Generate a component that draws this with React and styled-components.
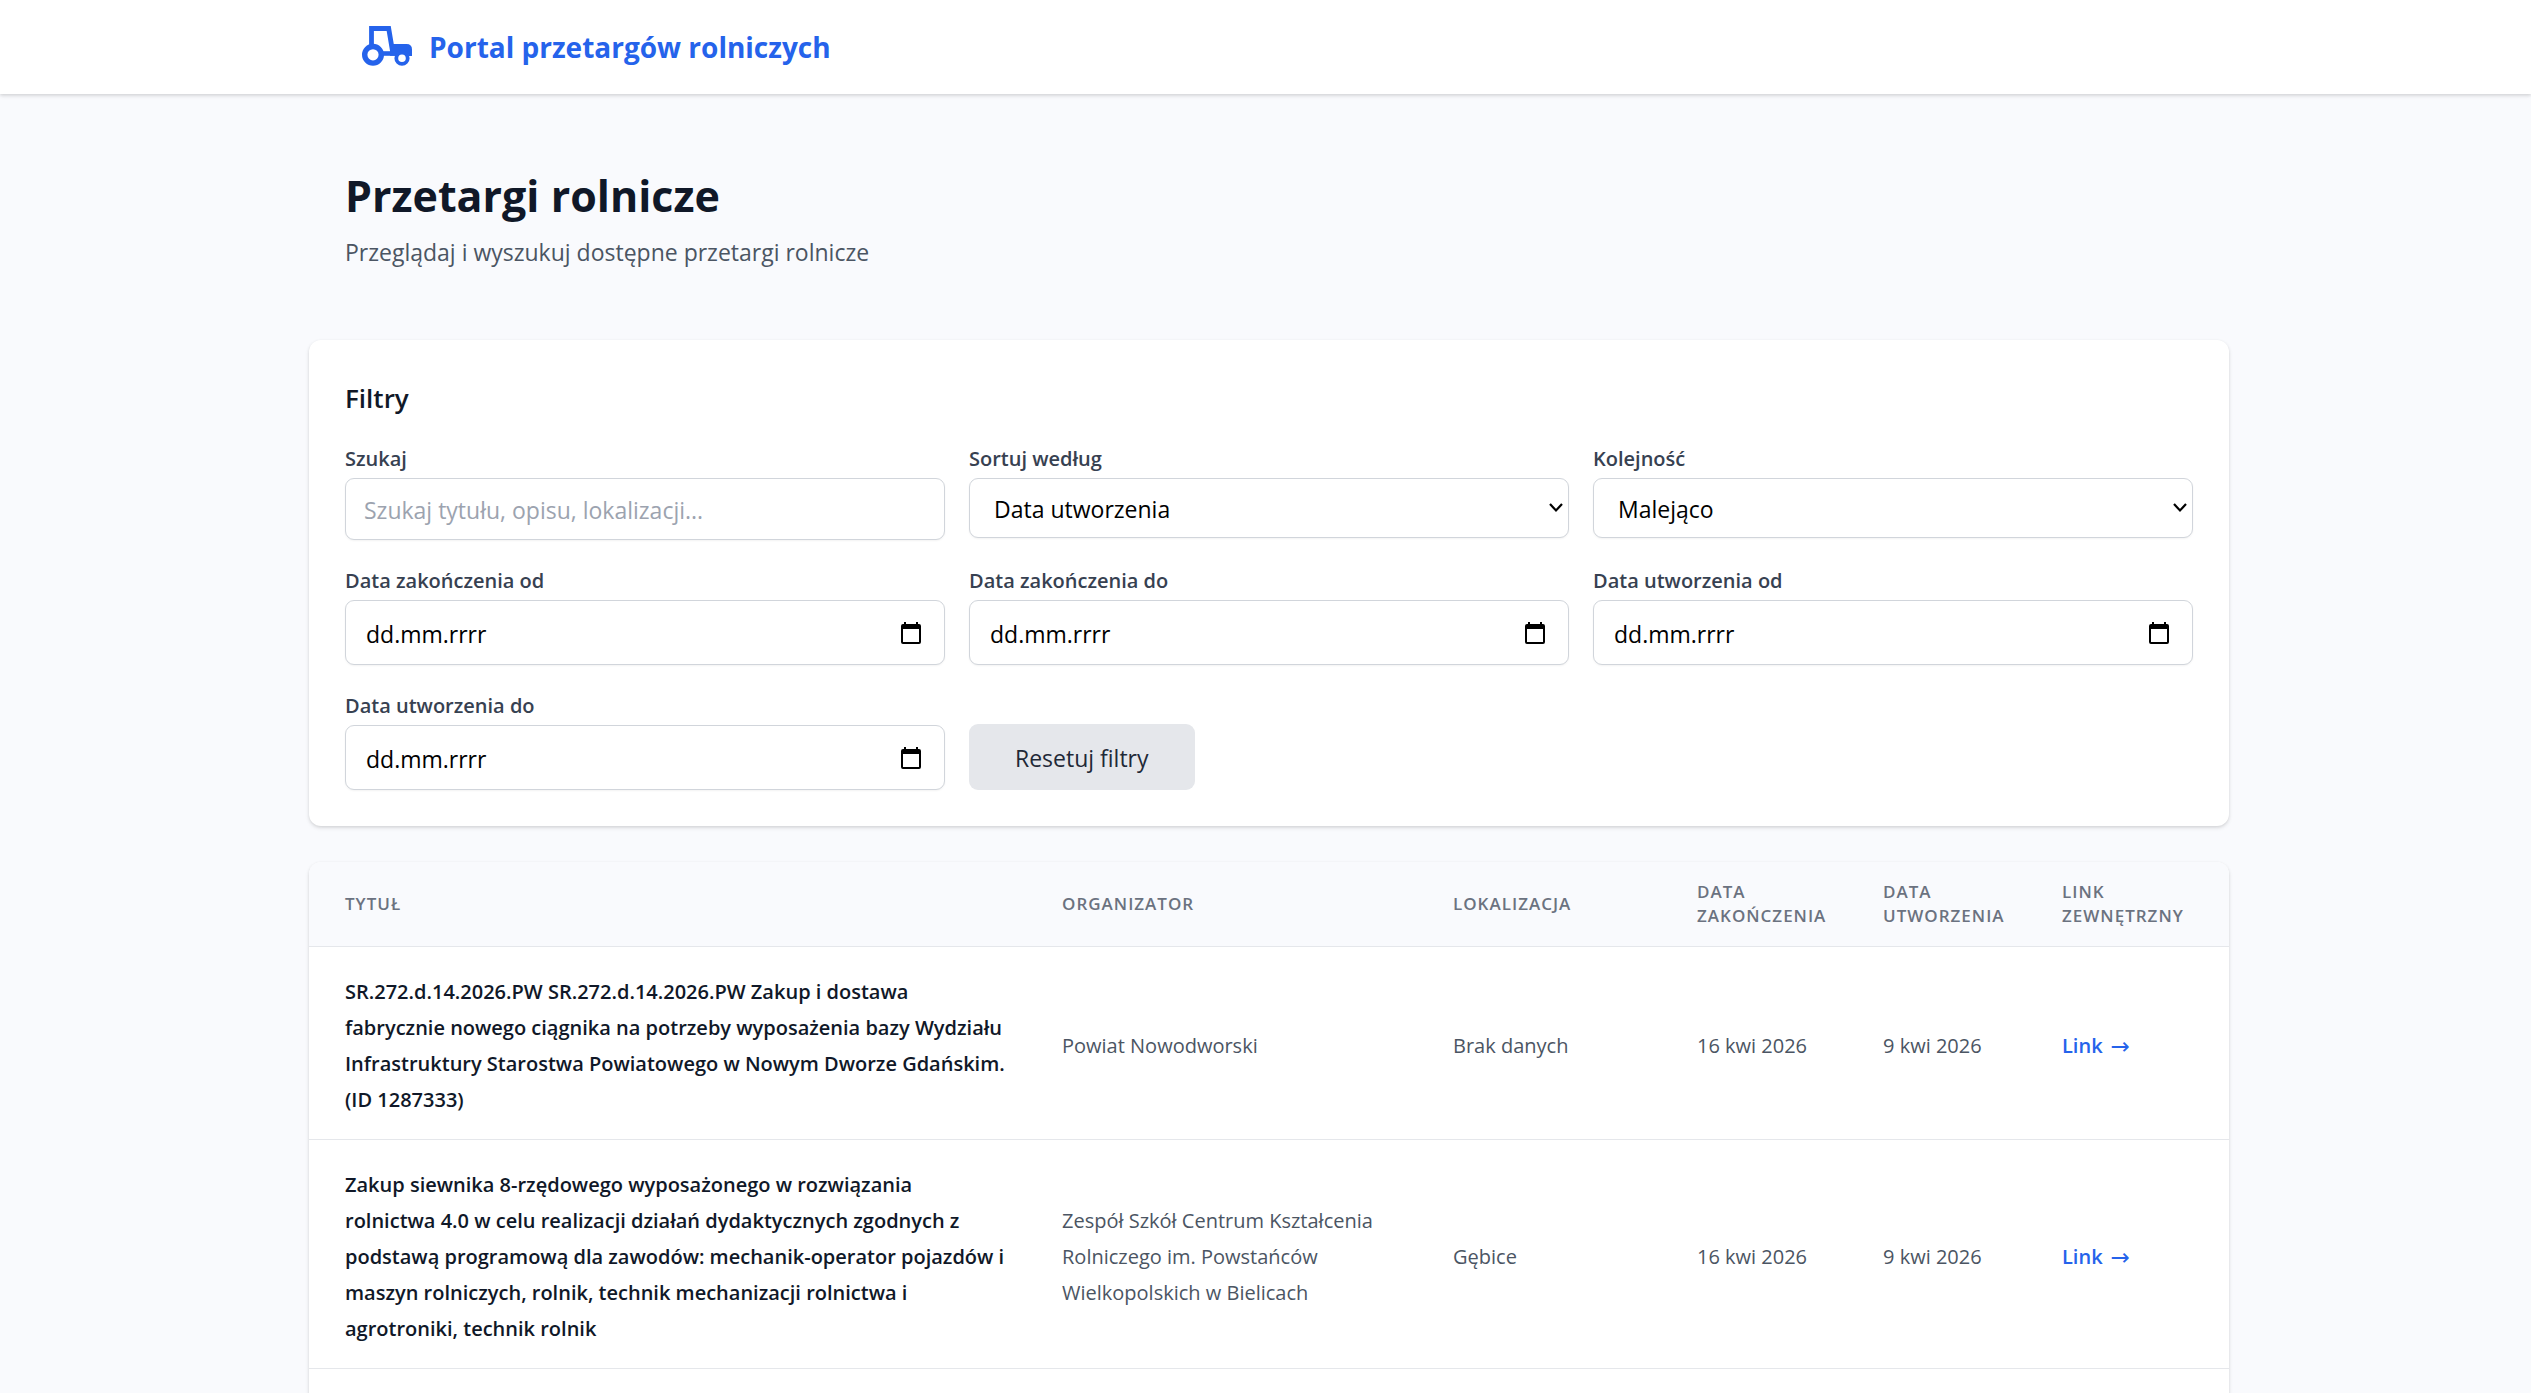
import React from "react";
import styled, { createGlobalStyle, css } from "styled-components";

const GlobalStyle = createGlobalStyle`
  *, *::before, *::after { box-sizing: border-box; }
  body {
    margin: 0;
    background: #f9fafd;
    color: #101828;
    font-family: "Segoe UI", "Open Sans", "Noto Sans", sans-serif;
    font-size: 23px;
    line-height: 36px;
  }
  button, input, select { font: inherit; color: inherit; }
`;

const shadow = "0 2px 4px rgba(0, 0, 0, 0.1), 0 1px 3px rgba(0, 0, 0, 0.08)";

const Header = styled.header`
  padding: 0 24px 0 31px;
  background: #fff;
  box-shadow: ${shadow};
`;

const HeaderInner = styled.div`
  display: flex;
  align-items: center;
  max-width: 1920px;
  height: 94px;
  margin: 0 auto;
  padding: 0 48px;
`;

const Brand = styled.a`
  display: flex;
  align-items: center;
  gap: 12px;
  color: #2563eb;
  font-size: 28px;
  font-weight: 700;
  text-decoration: none;
`;

const Main = styled.main`
  padding: 72px 24px 0 31px;
`;

const Container = styled.div`
  display: flex;
  flex-direction: column;
  gap: 36px;
  max-width: 1920px;
  margin: 0 auto;
`;

const Intro = styled.div`
  padding: 0 36px 34px;
`;

const PageTitle = styled.h1`
  margin: 0 0 8px;
  font-size: 43px;
  line-height: 60px;
  font-weight: 700;
`;

const Lead = styled.p`
  margin: 0;
  color: #4b5563;
`;

const Card = styled.section`
  background: #fff;
  border-radius: 12px;
  box-shadow: ${shadow};
`;

const Filters = styled(Card)`
  padding: 36px;
`;

const CardTitle = styled.h2`
  margin: 0 0 22px;
  font-size: 26px;
  line-height: 44px;
  font-weight: 600;
`;

const FilterGrid = styled.form`
  display: grid;
  grid-template-columns: repeat(3, 1fr);
  gap: 24px;
  align-items: start;
`;

const Field = styled.div`
  display: flex;
  flex-direction: column;
  gap: 2px;
`;

const Label = styled.label`
  color: #374151;
  font-size: 20px;
  line-height: 34px;
  font-weight: 600;
`;

const Control = styled.div`
  position: relative;
  display: flex;
`;

const box = css`
  width: 100%;
  height: ${(p) => p.$height}px;
  margin: 0;
  border: 1px solid #d1d5db;
  border-radius: 9px;
  background: #fff;
  box-shadow: 0 1px 2px rgba(0, 0, 0, 0.05);
`;

const TextInput = styled.input`
  ${box}
  padding: 2px 18px 0;
  &::placeholder { color: #9ca3af; opacity: 1; }
`;

const DateInput = styled.input`
  ${box}
  padding: 2px 60px 0 20px;
  &::placeholder { color: #000; opacity: 1; }
`;

const Select = styled.select`
  ${box}
  appearance: none;
  padding: 2px 48px 0 24px;
  color: #000;
`;

const PickerButton = styled.button`
  position: absolute;
  top: 0;
  right: 18px;
  display: flex;
  align-items: center;
  height: 100%;
  padding: 0 6px;
  border: 0;
  background: none;
  color: #000;
`;

const Chevron = styled.svg`
  position: absolute;
  top: 24px;
  right: 6px;
  pointer-events: none;
`;

const ResetButton = styled.button`
  align-self: end;
  justify-self: start;
  height: 66px;
  padding: 2px 46px 0;
  border: 0;
  border-radius: 9px;
  background: #e5e7eb;
  color: #1f2937;
`;

const TableCard = styled(Card)`
  overflow: hidden;
`;

const Table = styled.table`
  width: 100%;
  border-collapse: separate;
  border-spacing: 0;
  table-layout: fixed;
`;

const Col = styled.col`
  width: ${(p) => (p.$width ? `${p.$width}px` : "auto")};
`;

const Th = styled.th`
  padding: 18px 36px;
  background: #f9fafd;
  color: #6b7280;
  font-size: 17px;
  line-height: 24px;
  font-weight: 600;
  letter-spacing: 1px;
  text-align: left;
  text-transform: uppercase;
`;

const Td = styled.td`
  padding: 27px 20px 21px 36px;
  border-top: 1px solid #e5e7eb;
  color: #4b5563;
  font-size: 20px;
  vertical-align: middle;
`;

const TitleTd = styled(Td)`
  color: #101828;
  font-weight: 600;
`;

const OrganizerTd = styled(Td)`
  padding-right: 36px;
`;

const RowLink = styled.a`
  display: inline-flex;
  align-items: center;
  gap: 8px;
  color: #2563eb;
  font-weight: 600;
  text-decoration: none;
`;

const Arrow = styled.span`
  font-family: "DejaVu Sans", sans-serif;
  font-size: 23px;
  font-weight: 400;
`;

function TractorIcon() {
  return (
    <svg width="60" height="60" viewBox="0 0 60 60" fill="none" stroke="currentColor" aria-hidden="true">
      <path d="M14.500 29V11.500H31.700L35.500 34" strokeWidth="4.800" />
      <path d="M26 36.500H40" strokeWidth="4.600" />
      <path d="M33 27H49.500Q55 27 55 32.500V39H52A8 8 0 0 0 38 38.800H33Z" fill="currentColor" stroke="none" />
      <circle cx="16" cy="37.800" r="8.300" strokeWidth="5.400" />
      <circle cx="45" cy="41.200" r="5.700" strokeWidth="3.800" />
    </svg>
  );
}

function CalendarIcon() {
  return (
    <svg width="20" height="22" viewBox="0 0 20 22" fill="none" aria-hidden="true">
      <path d="M3 0H5V2H15V0H17V2H18Q20 2 20 4V20Q20 22 18 22H2Q0 22 0 20V4Q0 2 2 2H3Z M2 7V20H18V7Z" fill="currentColor" fillRule="evenodd" />
    </svg>
  );
}

function DateField({ id, label }) {
  return (
    <Field>
      <Label htmlFor={id}>{label}</Label>
      <Control>
        <DateInput id={id} type="text" placeholder="dd.mm.rrrr" $height={65} />
        <PickerButton type="button" aria-label={`${label} – kalendarz`}>
          <CalendarIcon />
        </PickerButton>
      </Control>
    </Field>
  );
}

function SelectField({ id, label, options }) {
  return (
    <Field>
      <Label htmlFor={id}>{label}</Label>
      <Control>
        <Select id={id} $height={60}>
          {options.map((option) => (
            <option key={option}>{option}</option>
          ))}
        </Select>
        <Chevron width="14" height="12" viewBox="0 0 14 12" fill="none" stroke="#000" strokeWidth="2.200" aria-hidden="true">
          <path d="M1 2L7 8.500L13 2" />
        </Chevron>
      </Control>
    </Field>
  );
}

const columns = [
  { name: "Tytuł" },
  { name: "Organizator", width: 391 },
  { name: "Lokalizacja", width: 244 },
  { name: "Data zakończenia", width: 186 },
  { name: "Data utworzenia", width: 179 },
  { name: "Link zewnętrzny", width: 203 },
];

const tenders = [
  {
    title:
      "SR.272.d.14.2026.PW SR.272.d.14.2026.PW Zakup i dostawa fabrycznie nowego ciągnika na potrzeby wyposażenia bazy Wydziału Infrastruktury Starostwa Powiatowego w Nowym Dworze Gdańskim. (ID 1287333)",
    organizer: "Powiat Nowodworski",
    place: "Brak danych",
    ends: "16 kwi 2026",
    created: "9 kwi 2026",
  },
  {
    title:
      "Zakup siewnika 8-rzędowego wyposażonego w rozwiązania rolnictwa 4.0 w celu realizacji działań dydaktycznych zgodnych z podstawą programową dla zawodów: mechanik-operator pojazdów i maszyn rolniczych, rolnik, technik mechanizacji rolnictwa i agrotroniki, technik rolnik",
    organizer: "Zespół Szkół Centrum Kształcenia Rolniczego im. Powstańców Wielkopolskich w Bielicach",
    place: "Gębice",
    ends: "16 kwi 2026",
    created: "9 kwi 2026",
  },
];

export default function App() {
  return (
    <>
      <GlobalStyle />
      <Header>
        <HeaderInner>
          <Brand href="#">
            <TractorIcon />
            Portal przetargów rolniczych
          </Brand>
        </HeaderInner>
      </Header>
      <Main>
        <Container>
          <Intro>
            <PageTitle>Przetargi rolnicze</PageTitle>
            <Lead>Przeglądaj i wyszukuj dostępne przetargi rolnicze</Lead>
          </Intro>
          <Filters>
            <CardTitle>Filtry</CardTitle>
            <FilterGrid>
              <Field>
                <Label htmlFor="search">Szukaj</Label>
                <Control>
                  <TextInput id="search" type="text" placeholder="Szukaj tytułu, opisu, lokalizacji..." $height={62} />
                </Control>
              </Field>
              <SelectField id="sort" label="Sortuj według" options={["Data utworzenia", "Data zakończenia"]} />
              <SelectField id="order" label="Kolejność" options={["Malejąco", "Rosnąco"]} />
              <DateField id="end-from" label="Data zakończenia od" />
              <DateField id="end-to" label="Data zakończenia do" />
              <DateField id="created-from" label="Data utworzenia od" />
              <DateField id="created-to" label="Data utworzenia do" />
              <ResetButton type="button">Resetuj filtry</ResetButton>
            </FilterGrid>
          </Filters>
          <TableCard>
            <Table>
              <colgroup>
                {columns.map((column) => (
                  <Col key={column.name} $width={column.width} />
                ))}
              </colgroup>
              <thead>
                <tr>
                  {columns.map((column) => (
                    <Th key={column.name} scope="col">{column.name}</Th>
                  ))}
                </tr>
              </thead>
              <tbody>
                {tenders.map((tender) => (
                  <tr key={tender.title}>
                    <TitleTd>{tender.title}</TitleTd>
                    <OrganizerTd>{tender.organizer}</OrganizerTd>
                    <Td>{tender.place}</Td>
                    <Td>{tender.ends}</Td>
                    <Td>{tender.created}</Td>
                    <Td>
                      <RowLink href="#">
                        Link <Arrow>→</Arrow>
                      </RowLink>
                    </Td>
                  </tr>
                ))}
                <tr>
                  <Td colSpan={columns.length} />
                </tr>
              </tbody>
            </Table>
          </TableCard>
        </Container>
      </Main>
    </>
  );
}
